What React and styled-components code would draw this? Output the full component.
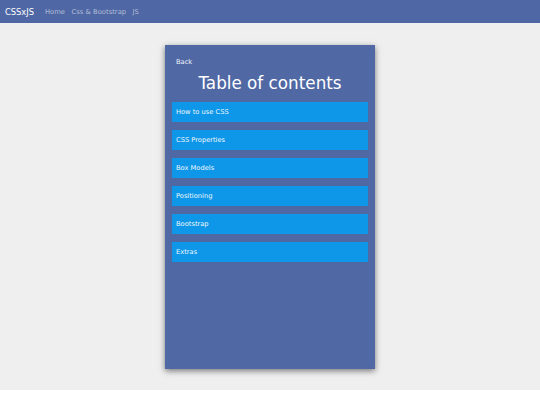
import React from "react";
import styled, { createGlobalStyle } from "styled-components";

const GlobalStyle = createGlobalStyle`
  body {
    margin: 0;
    background: #ffffff;
    font-family: "DejaVu Sans", "Liberation Sans", sans-serif;
  }
`;

const topics = [
  "How to use CSS",
  "CSS Properties",
  "Box Models",
  "Positioning",
  "Bootstrap",
  "Extras",
];

const App = () => {
  return (
    <>
      <GlobalStyle />
      <NavBar>
        <Brand>CSSxJS</Brand>
        <NavLink>Home</NavLink>
        <NavLink>Css &amp; Bootstrap</NavLink>
        <NavLink>JS</NavLink>
      </NavBar>
      <Main>
        <Card>
          <BackLink>Back</BackLink>
          <Title>Table of contents</Title>
          <TopicList>
            {topics.map((t) => (
              <TopicButton key={t}>{t}</TopicButton>
            ))}
          </TopicList>
        </Card>
      </Main>
    </>
  );
};

export default App;

const NavBar = styled.nav`
  display: flex;
  align-items: center;
  height: 23px;
  padding: 0 5px;
  background: #4f68a5;
`;

const Brand = styled.span`
  font-size: 8.3px;
  color: #ffffff;
  margin-right: 11px;
`;

const NavLink = styled.span`
  font-size: 6.8px;
  color: rgba(255, 255, 255, 0.55);
  margin-right: 6.5px;
`;

const Main = styled.main`
  display: flex;
  justify-content: center;
  align-items: flex-start;
  height: 367px;
  padding-top: 22px;
  box-sizing: border-box;
  background: #efefef;
`;

const Card = styled.section`
  width: 210px;
  height: 324px;
  box-sizing: border-box;
  padding: 13px 7px;
  background: #5069a5;
  box-shadow: 0 2px 6px rgba(0, 0, 0, 0.5);
  color: #ffffff;
`;

const BackLink = styled.div`
  font-size: 6.7px;
  padding-left: 4px;
  color: #f2f4fa;
`;

const Title = styled.h1`
  margin: 7px 0 9px;
  font-size: 16.8px;
  font-weight: normal;
  text-align: center;
  color: #ffffff;
`;

const TopicList = styled.div`
  display: flex;
  flex-direction: column;
  gap: 8px;
`;

const TopicButton = styled.div`
  height: 20px;
  display: flex;
  align-items: center;
  padding-left: 4px;
  background: #0e97e8;
  font-size: 6.7px;
  color: #eef6fd;
`;
